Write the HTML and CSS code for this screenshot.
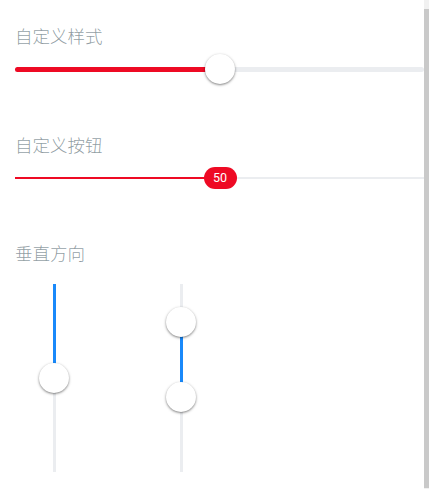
FILE: index.html
```html
<!DOCTYPE html>
<html lang="zh-CN">
<head>
    <meta charset="UTF-8">
    <meta name="viewport" content="width=device-width, initial-scale=1.0">
    <title>Slider 滑块</title>
    <link rel="stylesheet" href="styles.css">
</head>
<body>

<div class="page">
    <div class="demo-block">
        <h2 class="demo-title">自定义样式</h2>
        <div class="slider slider-thick">
            <div class="track">
                <div class="bar" style="width: 50%"></div>
            </div>
            <div class="thumb" style="left: 50%"></div>
        </div>
    </div>

    <div class="demo-block">
        <h2 class="demo-title title-second">自定义按钮</h2>
        <div class="slider slider-button">
            <div class="track">
                <div class="bar" style="width: 50%"></div>
            </div>
            <div class="pill" style="left: 50%">50</div>
        </div>
    </div>

    <div class="demo-block">
        <h2 class="demo-title title-third">垂直方向</h2>
        <div class="vertical-row">
            <div class="v-slider">
                <div class="v-track"></div>
                <div class="v-bar" style="top: 0; height: 50%"></div>
                <div class="thumb v-thumb" style="top: 50%"></div>
            </div>
            <div class="v-slider">
                <div class="v-track"></div>
                <div class="v-bar" style="top: 20%; height: 40%"></div>
                <div class="thumb v-thumb" style="top: 20%"></div>
                <div class="thumb v-thumb" style="top: 60%"></div>
            </div>
        </div>
    </div>
</div>

<div class="scrollbar">
    <div class="scrollbar-thumb"></div>
</div>

</body>
</html>
```

FILE: styles.css
```css
/* Slider demo page */
body {
    margin: 0;
    height: 489px;
    display: flex;
    overflow: hidden;
    background: #ffffff;
    font-family: Roboto, "Noto Sans CJK SC", sans-serif;
}

.page {
    flex: 1;
    min-width: 0;
}

.demo-title {
    margin: 0;
    padding: 25px 15px 0;
    font-size: 17.5px;
    font-weight: 300;
    line-height: 21px;
    color: rgba(69, 90, 100, 0.6);
    font-family: "Noto Sans CJK SC", sans-serif;
}

.title-second {
    padding-top: 50px;
}

.title-third {
    padding-top: 53px;
}

/* horizontal sliders */
.slider {
    position: relative;
    margin-left: 15px;
}

.slider-thick {
    height: 30px;
    margin-top: 8px;
}

.slider-button {
    height: 22px;
    margin-top: 12px;
}

.track {
    position: absolute;
    left: 0;
    right: 0;
    background: #ebedf0;
}

.slider-thick .track {
    top: 13px;
    height: 5px;
    border-radius: 3px;
}

.slider-button .track {
    top: 10px;
    height: 2px;
}

.bar {
    height: 100%;
    background: #ee0a24;
    border-radius: inherit;
}

.thumb {
    position: absolute;
    top: 0;
    width: 30px;
    height: 30px;
    margin-left: -15px;
    border-radius: 50%;
    background: #ffffff;
    box-shadow: 0 1px 2.5px rgba(0, 0, 0, 0.5);
}

.pill {
    position: absolute;
    top: 0;
    width: 33px;
    height: 22px;
    margin-left: -16px;
    border-radius: 100px;
    background: #ee0a24;
    color: #ffffff;
    font-size: 12.5px;
    line-height: 22px;
    text-align: center;
}

/* vertical sliders */
.vertical-row {
    display: flex;
    gap: 97px;
    height: 188px;
    margin-top: 21px;
    padding-left: 39px;
}

.v-slider {
    position: relative;
    width: 30px;
    height: 100%;
}

.v-track,
.v-bar {
    position: absolute;
    left: 14px;
    width: 2.5px;
}

.v-track {
    top: 0;
    bottom: 0;
    background: #ebedf0;
}

.v-bar {
    background: #1989fa;
}

.v-thumb {
    left: 15px;
    margin-top: -15px;
}

/* fake browser scrollbar */
.scrollbar {
    width: 5px;
    height: 100%;
    background: #f1f1f1;
}

.scrollbar-thumb {
    height: 479px;
    margin-top: 9px;
    background: #c9c9c9;
}
```
